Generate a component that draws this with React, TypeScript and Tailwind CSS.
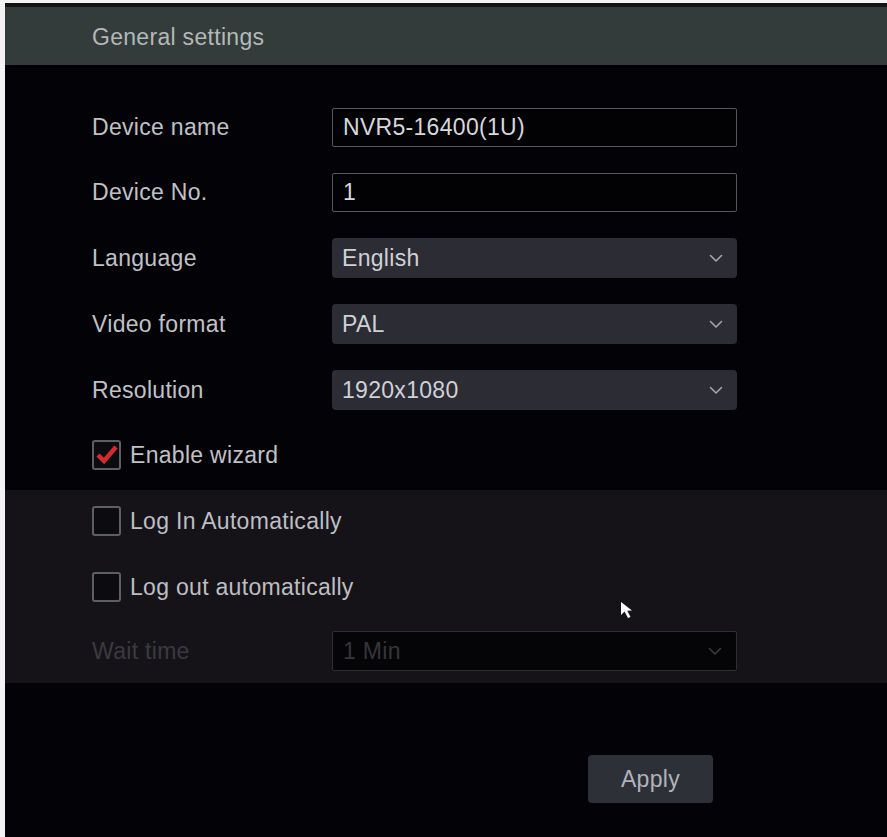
import React from "react";

const font = { fontFamily: '"Liberation Sans", Arial, sans-serif' };

function Chevron({ dim }: { dim?: boolean }) {
  return (
    <svg width="14" height="9" viewBox="0 0 14 9" className="shrink-0">
      <path
        d="M1.5 1.5 L7 7 L12.5 1.5"
        fill="none"
        stroke={dim ? "#3a3a40" : "#a4a5ad"}
        strokeWidth="1.6"
        strokeLinecap="round"
        strokeLinejoin="round"
      />
    </svg>
  );
}

function Label({ children, dim }: { children: React.ReactNode; dim?: boolean }) {
  return (
    <div className={`w-[240px] shrink-0 text-[23px] tracking-[0.3px] ${dim ? "text-[#3b3a40]" : "text-[#c0c1c6]"}`}>
      {children}
    </div>
  );
}

function TextInput({ value }: { value: string }) {
  return (
    <div className="w-[405px] h-[39px] border border-[#56575e] rounded-[2px] bg-[#020205] flex items-center px-[10px] text-[23px] tracking-[0.3px] text-[#d6d7dc]">
      {value}
    </div>
  );
}

function Select({ value }: { value: string }) {
  return (
    <div className="w-[405px] h-[40px] rounded-[4px] bg-[#2b2c34] flex items-center justify-between pl-[10px] pr-[14px] text-[23px] tracking-[0.3px] text-[#d0d1d6]">
      <span>{value}</span>
      <Chevron />
    </div>
  );
}

function Checkbox({ checked }: { checked?: boolean }) {
  return (
    <div className="w-[29px] h-[30px] rounded-[3px] border-2 border-[#5e5e65] bg-[#0c0b10] flex items-center justify-center shrink-0">
      {checked && (
        <svg width="22" height="20" viewBox="0 0 22 20">
          <path d="M2 10 L8 16 L20 2" fill="none" stroke="#d42a30" strokeWidth="4.5" strokeLinejoin="miter" />
        </svg>
      )}
    </div>
  );
}

export default function App() {
  return (
    <div style={font} className="w-[887px] h-[837px] bg-[#f3f3f3] pl-[5px] pt-[3px] flex flex-col overflow-hidden">
      <div className="flex-1 bg-[#030307] border-t-4 border-[#121414] flex flex-col relative">
        <div className="h-[58px] bg-[#343b3b] flex items-center pl-[87px] pt-[2px] text-[#b3b8b8] text-[23px] tracking-[0.3px]">
          General settings
        </div>

        <div className="pl-[87px] pt-[43px] flex flex-col gap-[26px]">
          <div className="flex items-center">
            <Label>Device name</Label>
            <TextInput value="NVR5-16400(1U)" />
          </div>
          <div className="flex items-center">
            <Label>Device No.</Label>
            <TextInput value="1" />
          </div>
          <div className="flex items-center">
            <Label>Language</Label>
            <Select value="English" />
          </div>
          <div className="flex items-center">
            <Label>Video format</Label>
            <Select value="PAL" />
          </div>
          <div className="flex items-center">
            <Label>Resolution</Label>
            <Select value="1920x1080" />
          </div>
        </div>

        <div className="pl-[87px] mt-[30px] mb-[20px] h-[30px] flex items-center gap-[9px]">
          <Checkbox checked />
          <span className="text-[23px] tracking-[0.3px] text-[#c0c1c6]">Enable wizard</span>
        </div>

        <div className="bg-[#151318] h-[193px] pl-[87px] pt-[16px] flex flex-col">
          <div className="flex items-center gap-[9px] h-[30px]">
            <Checkbox />
            <span className="text-[23px] tracking-[0.3px] text-[#bdbec3]">Log In Automatically</span>
          </div>
          <div className="flex items-center gap-[9px] h-[30px] mt-[36px]">
            <Checkbox />
            <span className="text-[23px] tracking-[0.3px] text-[#bdbec3]">Log out automatically</span>
          </div>
          <div className="flex items-center mt-[29px]">
            <Label dim>Wait time</Label>
            <div className="w-[405px] h-[40px] border border-[#2e2e34] rounded-[2px] bg-[#050508] flex items-center justify-between pl-[10px] pr-[14px] text-[23px] tracking-[0.3px] text-[#36353b]">
              <span>1 Min</span>
              <Chevron dim />
            </div>
          </div>
        </div>

        <div className="flex justify-end pr-[174px] pt-[72px]">
          <div className="w-[125px] h-[48px] rounded-[4px] bg-[#2e3038] flex items-center justify-center text-[23px] tracking-[0.3px] text-[#b1b3bb]">
            Apply
          </div>
        </div>

        <svg
          width="18"
          height="20"
          viewBox="0 0 18 20"
          className="absolute left-[614px] top-[593px]"
        >
          <path d="M2 2 L2 15 L5.5 11.5 L9 18 L11.5 17 L8.3 10.8 L13 10.5 Z" fill="#ffffff" />
        </svg>
      </div>
    </div>
  );
}
